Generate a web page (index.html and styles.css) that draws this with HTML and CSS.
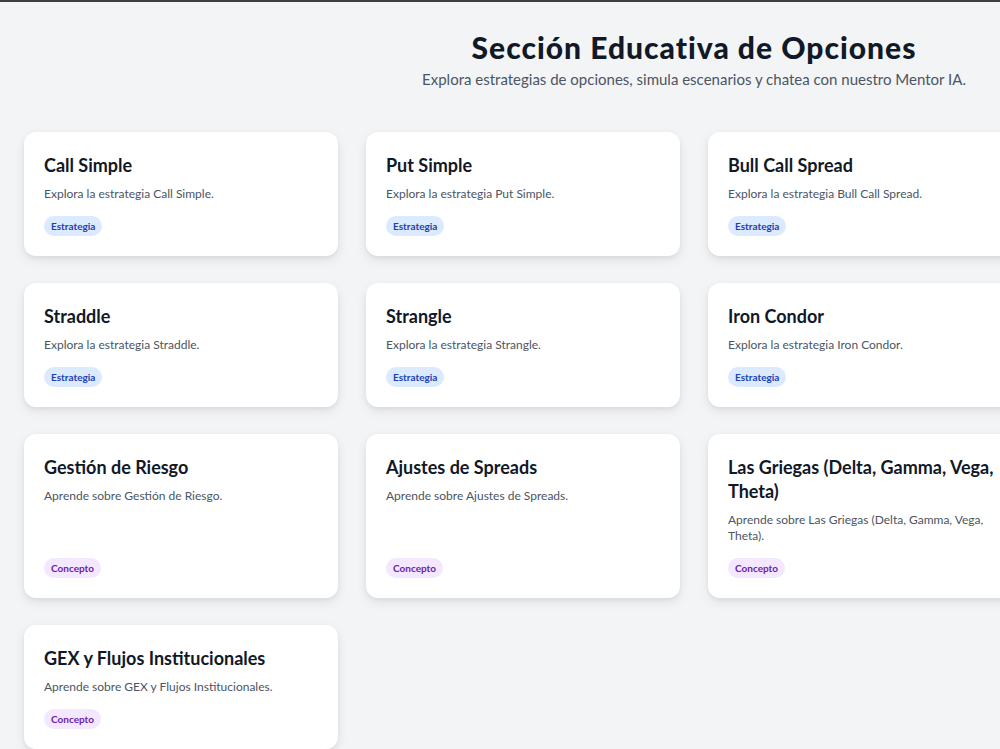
FILE: index.html
```html
<!DOCTYPE html>
<html lang="es">
<head>
  <meta charset="UTF-8" />
  <meta name="viewport" content="width=device-width, initial-scale=1.0"/>
  <title>Sección Educativa de Opciones</title>
  <link rel="stylesheet" href="styles.css">
</head>
<body>
  <div class="page">
    <header class="header">
      <h1>Sección Educativa de Opciones</h1>
      <p>Explora estrategias de opciones, simula escenarios y chatea con nuestro Mentor IA.</p>
    </header>

    <!-- Strategies and concepts -->
    <div class="grid">
      <div class="card">
        <h3>Call Simple</h3>
        <p>Explora la estrategia Call Simple.</p>
        <span class="tag tag-strategy">Estrategia</span>
      </div>
      <div class="card">
        <h3>Put Simple</h3>
        <p>Explora la estrategia Put Simple.</p>
        <span class="tag tag-strategy">Estrategia</span>
      </div>
      <div class="card">
        <h3>Bull Call Spread</h3>
        <p>Explora la estrategia Bull Call Spread.</p>
        <span class="tag tag-strategy">Estrategia</span>
      </div>
      <div class="card">
        <h3>Straddle</h3>
        <p>Explora la estrategia Straddle.</p>
        <span class="tag tag-strategy">Estrategia</span>
      </div>
      <div class="card">
        <h3>Strangle</h3>
        <p>Explora la estrategia Strangle.</p>
        <span class="tag tag-strategy">Estrategia</span>
      </div>
      <div class="card">
        <h3>Iron Condor</h3>
        <p>Explora la estrategia Iron Condor.</p>
        <span class="tag tag-strategy">Estrategia</span>
      </div>
      <div class="card">
        <h3>Gestión de Riesgo</h3>
        <p>Aprende sobre Gestión de Riesgo.</p>
        <span class="tag tag-concept">Concepto</span>
      </div>
      <div class="card">
        <h3>Ajustes de Spreads</h3>
        <p>Aprende sobre Ajustes de Spreads.</p>
        <span class="tag tag-concept">Concepto</span>
      </div>
      <div class="card">
        <h3>Las Griegas (Delta, Gamma, Vega, Theta)</h3>
        <p>Aprende sobre Las Griegas (Delta, Gamma, Vega, Theta).</p>
        <span class="tag tag-concept">Concepto</span>
      </div>
      <div class="card">
        <h3>GEX y Flujos Institucionales</h3>
        <p>Aprende sobre GEX y Flujos Institucionales.</p>
        <span class="tag tag-concept">Concepto</span>
      </div>
    </div>
  </div>
</body>
</html>
```

FILE: styles.css
```css
html, body {
  margin: 0;
  overflow-x: hidden;
}
body {
  font-family: "Lato", "Noto Sans", sans-serif;
  background-color: #f3f4f6;
  border-top: 2px solid #3f3f46;
  color: #111827;
}
.page {
  width: 1340px;
  padding: 0 24px 40px;
}
.header {
  text-align: center;
  padding-top: 27px;
  margin-bottom: 42px;
}
.header h1 {
  margin: 0;
  font-size: 30px;
  font-weight: 900;
  line-height: 36px;
  letter-spacing: 1px;
}
.header p {
  margin: 3px 0 0;
  font-size: 15px;
  line-height: 22px;
  color: #4b5563;
}
.grid {
  display: grid;
  grid-template-columns: repeat(3, 314px);
  gap: 27px 28px;
}
.card {
  background: white;
  border-radius: 12px;
  padding: 21px 20px 20px;
  box-shadow: 0 4px 12px rgba(0, 0, 0, 0.08), 0 2px 4px rgba(0, 0, 0, 0.05);
  display: flex;
  flex-direction: column;
  align-items: flex-start;
}
.card h3 {
  margin: 0;
  font-size: 18px;
  font-weight: 700;
  line-height: 24px;
}
.card p {
  margin: 9px 0 14px;
  font-size: 12px;
  line-height: 16px;
  color: #4b5563;
  flex: 1;
}
.tag {
  display: inline-block;
  font-size: 10px;
  font-weight: 700;
  padding: 0 7px;
  border-radius: 999px;
  line-height: 20px;
}
.tag-strategy {
  background: #dbeafe;
  color: #1e40af;
}
.tag-concept {
  background: #f3e8ff;
  color: #6b21a8;
}
```
